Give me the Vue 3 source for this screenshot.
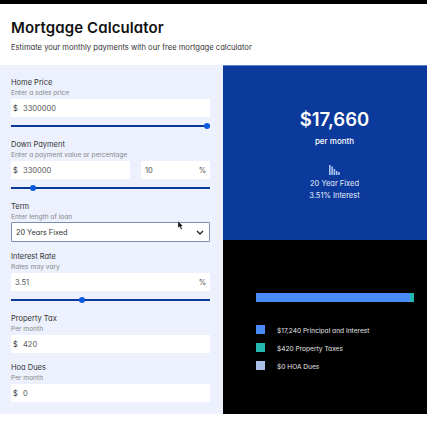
<script setup>
const legend = [
  { c: '#4a8cf7', t: '$17,240 Principal and Interest' },
  { c: '#22b8b0', t: '$420 Property Taxes' },
  { c: '#a9bfe8', t: '$0 HOA Dues' },
]
</script>

<template>
  <div class="page">
    <div class="topbar"></div>
    <header class="head">
      <h1>Mortgage Calculator</h1>
      <p>Estimate your monthly payments with our free mortgage calculator</p>
    </header>
    <main class="main">
      <section class="form">
        <div class="field has-slider">
          <div class="lab">Home Price</div>
          <div class="hint">Enter a sales price</div>
          <div class="input"><span class="cur">$</span><span>3300000</span></div>
          <div class="slider"><i class="knob end"></i></div>
        </div>
        <div class="field has-slider">
          <div class="lab">Down Payment</div>
          <div class="hint">Enter a payment value or percentage</div>
          <div class="two">
            <div class="input"><span class="cur">$</span><span>330000</span></div>
            <div class="input pct"><span>10</span><span class="suf">%</span></div>
          </div>
          <div class="slider"><i class="knob k1"></i></div>
        </div>
        <div class="field">
          <div class="lab">Term</div>
          <div class="hint">Enter length of loan</div>
          <div class="select"><span>20 Years Fixed</span>
            <svg width="8" height="5" viewBox="0 0 8 5"><path d="M1 1l3 3 3-3" fill="none" stroke="#222" stroke-width="1.3"/></svg>
            <svg class="cursor" width="6" height="9" viewBox="0 0 6 9"><path d="M0 0v7l1.6-1.4L3 8.6l1.2-.5-1.3-2.9H5z" fill="#111" stroke="#fff" stroke-width=".3"/></svg>
          </div>
        </div>
        <div class="field has-slider">
          <div class="lab">Interest Rate</div>
          <div class="hint">Rates may vary</div>
          <div class="input solo"><span>3.51</span><span class="suf">%</span></div>
          <div class="slider"><i class="knob k2"></i></div>
        </div>
        <div class="field">
          <div class="lab">Property Tax</div>
          <div class="hint">Per month</div>
          <div class="input"><span class="cur">$</span><span>420</span></div>
        </div>
        <div class="field">
          <div class="lab">Hoa Dues</div>
          <div class="hint">Per month</div>
          <div class="input"><span class="cur">$</span><span>0</span></div>
        </div>
      </section>
      <section class="out">
        <div class="blue">
          <div class="amount">$17,660</div>
          <div class="per">per month</div>
          <svg class="bars" width="11" height="10" viewBox="0 0 11 10" fill="#a9c2ee">
            <rect x="0" y="0" width="1.6" height="10"/><rect x="2.3" y="1.5" width="1.6" height="8.5"/><rect x="4.6" y="4" width="1.6" height="6"/><rect x="6.9" y="6" width="1.6" height="4"/><rect x="9.2" y="7" width="1.6" height="3"/>
          </svg>
          <div class="sub">20 Year Fixed</div>
          <div class="sub">3.51% Interest</div>
        </div>
        <div class="black">
          <div class="bar"><i></i></div>
          <ul>
            <li v-for="l in legend" :key="l.t"><i :style="{ background: l.c }"></i>{{ l.t }}</li>
          </ul>
        </div>
      </section>
    </main>
  </div>
</template>

<style>
html, body { margin: 0; background: #fff; }
</style>
<style scoped>
.page { width: 427px; height: 427px; overflow: hidden; font-family: Inter, "Liberation Sans", sans-serif; font-feature-settings: "cv11"; background: #fff; color: #1a1a2e; }
.topbar { height: 4px; background: #000; }
.head { padding: 15px 11px 0; height: 61px; box-sizing: border-box; }
.head h1 { margin: 0; font-size: 15px; line-height: 18px; font-weight: 600; letter-spacing: .1px; color: #111; }
.head p { margin: 5px 0 0; font-size: 7.6px; line-height: 11px; color: #333; }
.main { display: flex; height: 349px; }
.form { width: 223px; box-sizing: border-box; background: #ecf1fd; padding: 11px 13px 12px 11px; }
.field { margin-bottom: 8px; }
.field.has-slider { margin-bottom: 11px; }
.field:last-child { margin-bottom: 0; }
.lab { font-size: 7.5px; line-height: 14px; height: 12px; color: #333; }
.hint { font-size: 6.6px; line-height: 11px; height: 11px; color: #888; }
.input { height: 18px; background: #fff; display: flex; align-items: center; padding: 0 4px 0 2px; font-size: 7.5px; color: #555; box-sizing: border-box; }
.cur { width: 5px; text-align: center; color: #333; margin-right: 5px; }
.solo { padding-left: 4px; }
.pct { padding-left: 4px; }
.suf { margin-left: auto; color: #555; }
.two { display: flex; justify-content: space-between; }
.two .input { width: 119px; }
.two .pct { width: 69px; }
.slider { position: relative; height: 2px; background: #0a3a9a; margin-top: 8px; }
.knob { position: absolute; top: -2px; width: 6px; height: 6px; border-radius: 50%; background: #0a5ae0; }
.knob.end { right: 0; }
.k1 { left: 19px; }
.k2 { left: 68px; }
.select { position: relative; height: 20px; margin-top: -1px; border: 1px solid #7d8fb5; border-radius: 1px; background: #fff; display: flex; align-items: center; justify-content: space-between; padding: 0 5px 0 4px; font-size: 7.3px; box-sizing: border-box; color: #333; }
.cursor { position: absolute; left: 166px; top: -2px; }
.out { flex: 1; display: flex; flex-direction: column; }
.blue { height: 175px; background: #0b3a9c; border-top: 1px solid #5c86cc; color: #fff; display: flex; flex-direction: column; align-items: center; padding: 41px 0 0 19px; box-sizing: border-box; }
.amount { font-size: 18.5px; line-height: 24px; font-weight: 600; }
.per { font-size: 8px; line-height: 12px; margin-top: 4px; font-weight: 500; }
.bars { margin-top: 18px; }
.sub { font-size: 7.5px; line-height: 12px; color: #e8eefb; }
.bars + .sub { margin-top: 3px; }
.black { flex: 1; background: #000; padding: 53px 13px 0 33px; color: #fff; }
.bar { height: 9px; background: #4a8cf7; position: relative; }
.bar i { position: absolute; right: 0; top: 0; bottom: 0; width: 4px; background: #22b8b0; }
ul { list-style: none; margin: 20px 0 0; padding: 0; }
li { display: flex; align-items: center; gap: 12px; font-size: 6.6px; height: 18px; color: #e6e6e6; }
li i { width: 9px; height: 9px; display: block; margin-bottom: 3px; }
</style>
